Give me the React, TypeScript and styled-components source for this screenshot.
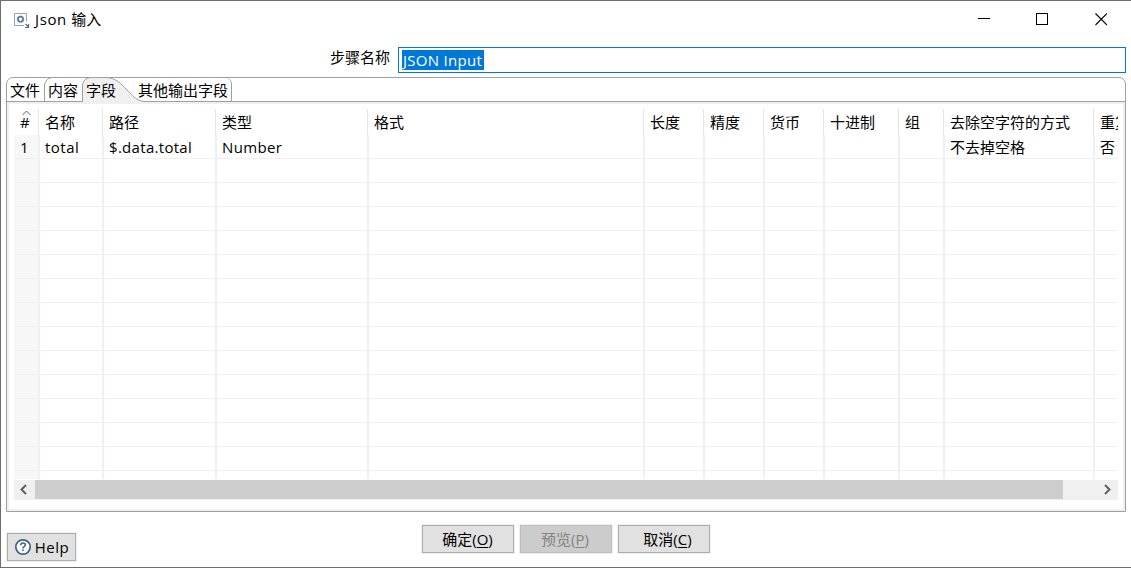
import React from 'react';
import styled, { createGlobalStyle, css } from 'styled-components';

const Global = createGlobalStyle`
  * { box-sizing: border-box; }
  body { margin: 0; background: #fff; }
`;

const Dialog = styled.div`
  width: 1131px;
  height: 568px;
  display: flex;
  flex-direction: column;
  overflow: hidden;
  background: #fff;
  color: #000;
  border: 1px solid #6e6e6e;
  border-right: 0;
  font: 15px/20px 'Open Sans', 'Noto Sans CJK SC', sans-serif;
  white-space: nowrap;
`;

const TitleBar = styled.header`
  display: flex;
  flex: 0 0 46px;
  align-items: flex-start;
  padding: 0 24px 0 12px;
`;

const StepIcon = styled.svg`
  width: 17px;
  height: 17px;
  margin-top: 11px;
`;

const Title = styled.span`
  margin: 8px auto 0 5px;
`;

const WindowControls = styled.svg`
  width: 130px;
  height: 14px;
  margin-top: 11px;
`;

const NameRow = styled.div`
  display: flex;
  flex: 0 0 26px;
  padding: 0 5px 0 329px;
`;

const Label = styled.label`
  width: 68px;
`;

const NameField = styled.div`
  flex: 1;
  height: 26px;
  padding: 2px 3px;
  border: 1px solid #0078d7;
`;

const Selection = styled.span`
  display: block;
  width: 82px;
  height: 20px;
  padding-left: 1px;
  line-height: 21px;
  letter-spacing: 0.3px;
  color: #fff;
  background: #0078d7;
`;

const Folder = styled.section`
  display: flex;
  flex-direction: column;
  width: 1120px;
  height: 435px;
  margin: 4px 0 0 5px;
  border: 1px solid #a0a0a0;
  border-radius: 7px 7px 0 0;
`;

const TabStrip = styled.nav`
  display: flex;
  flex: 0 0 24px;
  border-bottom: 1px solid #a0a0a0;
`;

const Tab = styled.div<{ $width: number; $last?: boolean; $indent?: number }>`
  position: relative;
  width: ${p => p.$width}px;
  height: 23px;
  padding-left: ${p => p.$indent ?? 3}px;
  line-height: 25px;
  ${p => p.$last && css`
    border-right: 1px solid #a0a0a0;
    border-top-right-radius: 6px;
  `}
`;

const TabEdge = styled.svg`
  position: absolute;
  left: 0;
  top: -1px;
  overflow: visible;
`;

const TabText = styled.span`
  position: relative;
`;

const Page = styled.div`
  flex: 1;
  border: 2px solid #f0f0f0;
  padding: 5px 5px 0;
`;

const columns = '24px 64px 113px 152px 276px 60px 60px 60px 75px 45px 150px 25px';

const HeaderRow = styled.div`
  display: grid;
  grid-template-columns: ${columns};
  height: 26px;
`;

const HeaderCell = styled.div`
  position: relative;
  overflow: hidden;
  padding-left: 6px;
  line-height: 26px;
  border-left: 1px solid #e5e5e5;
  &:first-child { border-left: 0; }
`;

const SortMark = styled.svg`
  position: absolute;
  left: 8px;
  top: 1px;
`;

const Body = styled.div`
  height: 344px;
  overflow: hidden;
`;

const Row = styled.div`
  display: grid;
  grid-template-columns: ${columns};
  height: 24px;
`;

const Cell = styled.div`
  overflow: hidden;
  padding-left: 5px;
  line-height: 24px;
  border-left: 2px solid #edf0f7;
  background: linear-gradient(#f0f0f4, #f0f0f4) bottom / 100% 1px no-repeat;
  &:first-child {
    padding-left: 6px;
    border-left: 0;
    background-color: #f7f7f7;
  }
`;

const ScrollBar = styled.div`
  display: flex;
  height: 20px;
  margin-top: 1px;
  background: #f0f0f0;
`;

const Thumb = styled.div`
  width: 1028px;
  height: 19px;
  background: #cdcdcd;
`;

const ScrollArrow = styled.svg<{ $width: number }>`
  width: ${p => p.$width}px;
  height: 20px;
`;

const Footer = styled.footer`
  display: flex;
  align-items: flex-start;
  padding: 13px 0 0 6px;
`;

const Button = styled.button<{ $width: number; $left?: number; $top?: number }>`
  display: flex;
  align-items: center;
  justify-content: center;
  width: ${p => p.$width}px;
  height: 28px;
  margin: ${p => p.$top ?? 0}px 0 0 ${p => p.$left ?? 6}px;
  padding: 0;
  border: 1px solid #adadad;
  box-shadow: 0 0 0 1px #f0f0f0;
  background: #e1e1e1;
  color: #000;
  font: inherit;
  &:disabled {
    border-color: #bfbfbf;
    background: #ccc;
    color: #838383;
  }
`;

const Mnemonic = styled.span`
  text-decoration: underline;
  text-decoration-thickness: 1px;
  text-underline-offset: 2px;
`;

const Caption = styled.span<{ $before?: number; $after?: number }>`
  padding: 0 ${p => p.$after ?? 0}px 0 ${p => p.$before ?? 0}px;
`;

const Spaced = styled.span<{ $by: number }>`
  letter-spacing: ${p => p.$by}px;
`;

const headers = ['名称', '路径', '类型', '格式', '长度', '精度', '货币', '十进制', '组', '去除空字符的方式', '重复'];
const field: React.ReactNode[] = [
  '1',
  <Spaced $by={0.5}>total</Spaced>,
  <Spaced $by={0.3}>$.data.total</Spaced>,
  <Spaced $by={0.35}>Number</Spaced>,
  '', '', '', '', '', '',
  '不去掉空格',
  '否',
];
const blank: React.ReactNode[] = Array(12).fill('');
const rows = [field, ...Array.from({ length: 14 }, () => blank)];

export default function App() {
  return (
    <>
      <Global />
      <Dialog>
        <TitleBar>
          <StepIcon viewBox="0 0 17 17" fill="none">
            <path d="M11 13.5H1.5V1.5H13.5V9.5" stroke="#8fa6b7" />
            <circle cx="7.5" cy="7.2" r="2.6" stroke="#52748e" strokeWidth="1.8" />
            <path d="M7.5 3.2v1M7.5 10.2v1M3.5 7.2h1M10.5 7.2h1M4.8 4.5l.8.8M10.2 4.5l-.8.8M4.8 9.9l.8-.8M10.2 9.9l-.8-.8" stroke="#b4c3ce" />
            <path d="M12.5 12l2.5 2.5M15.5 12v3.5h-3.5" stroke="#52748e" strokeWidth="1.2" />
          </StepIcon>
          <Title><Spaced $by={0.6}>Json </Spaced>输入</Title>
          <WindowControls viewBox="0 0 130 14" fill="none" stroke="#000">
            <path d="M1 6.5h12M59.5 1.5h11v11h-11z" shapeRendering="crispEdges" />
            <path d="M118.5 1.5l11.5 11.5M130 1.5L118.5 13" strokeWidth="1.1" />
          </WindowControls>
        </TitleBar>
        <NameRow>
          <Label>步骤名称</Label>
          <NameField><Selection>JSON Input</Selection></NameField>
        </NameRow>
        <Folder>
          <TabStrip>
            <Tab $width={37}><TabText>文件</TabText></Tab>
            <Tab $width={38} $indent={4}>
              <TabEdge width="12" height="24" fill="none">
                <path d="M.5 24V8Q1.5 1.5 8 .5" stroke="#a0a0a0" />
              </TabEdge>
              <TabText>内容</TabText>
            </Tab>
            <Tab $width={49} $indent={4}>
              <TabEdge width="64" height="25" fill="none">
                <path d="M0 25V8Q1.5 1.5 8 .5H25C35 1.5 39 7 45 13C50 18 54 23.5 62 24.5V25Z" fill="#f0f0f0" />
                <path d="M.5 25V8Q1.5 1.5 8 .5H25C35 1.5 39 7 45 13C50 18 54 23.5 62 24.5" stroke="#a0a0a0" />
              </TabEdge>
              <TabText>字段</TabText>
            </Tab>
            <Tab $width={101} $last $indent={7}><TabText>其他输出字段</TabText></Tab>
          </TabStrip>
          <Page>
            <HeaderRow>
              <HeaderCell>
                <SortMark width="9" height="6" fill="none"><path d="M.5 5L4.5 1L8.5 5" stroke="#606060" /></SortMark>
                #
              </HeaderCell>
              {headers.map(h => <HeaderCell key={h}>{h}</HeaderCell>)}
            </HeaderRow>
            <Body>
              {rows.map((row, r) => (
                <Row key={r}>{row.map((text, c) => <Cell key={c}>{text}</Cell>)}</Row>
              ))}
            </Body>
            <ScrollBar>
              <ScrollArrow $width={21} viewBox="0 0 21 20" fill="none"><path d="M12 5L7.5 9.5l4.5 4.5" stroke="#606060" strokeWidth="2" /></ScrollArrow>
              <Thumb />
              <ScrollArrow $width={55} viewBox="0 0 55 20" fill="none"><path d="M42 5L46.5 9.5l-4.5 4.5" stroke="#606060" strokeWidth="2" /></ScrollArrow>
            </ScrollBar>
          </Page>
        </Folder>
        <Footer>
          <Button $width={69} $left={0} $top={8}>
            <svg width="18" height="18" viewBox="0 0 18 18" fill="none" stroke="#3d6480">
              <circle cx="9" cy="9" r="7.2" fill="#fff" strokeWidth="1.7" />
              <path d="M6.7 7.2Q6.8 5 9 5Q11.3 5 11.3 7Q11.3 8.2 9.8 8.9Q9 9.3 9 10.4M9 11.6v1.5" strokeWidth="1.6" />
            </svg>
            <Caption $before={3}><Spaced $by={0.5}>Help</Spaced></Caption>
          </Button>
          <Button $width={92} $left={346}><Caption $after={1}>确定(<Mnemonic>O</Mnemonic>)</Caption></Button>
          <Button $width={92} disabled><Caption $after={2}>预览(<Mnemonic>P</Mnemonic>)</Caption></Button>
          <Button $width={92}><Caption $before={7}>取消(<Mnemonic>C</Mnemonic>)</Caption></Button>
        </Footer>
      </Dialog>
    </>
  );
}
